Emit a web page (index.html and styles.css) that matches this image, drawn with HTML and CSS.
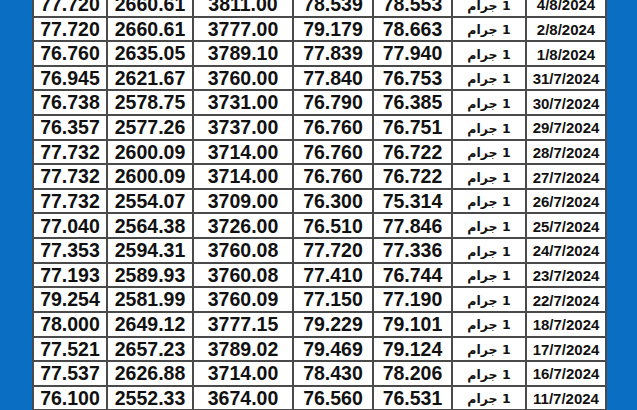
FILE: index.html
```html
<!DOCTYPE html>
<html lang="ar">
<head>
<meta charset="utf-8">
<link rel="stylesheet" href="styles.css">
</head>
<body>
<div class="page">
  <div class="grid" id="grid">
    <div class="c">77.720</div><div class="c">2660.61</div><div class="c">3811.00</div><div class="c">78.539</div><div class="c">78.553</div><div class="c ar">1 جرام</div><div class="c d">4/8/2024</div>
    <div class="c">77.720</div><div class="c">2660.61</div><div class="c">3777.00</div><div class="c">79.179</div><div class="c">78.663</div><div class="c ar">1 جرام</div><div class="c d">2/8/2024</div>
    <div class="c">76.760</div><div class="c">2635.05</div><div class="c">3789.10</div><div class="c">77.839</div><div class="c">77.940</div><div class="c ar">1 جرام</div><div class="c d">1/8/2024</div>
    <div class="c">76.945</div><div class="c">2621.67</div><div class="c">3760.00</div><div class="c">77.840</div><div class="c">76.753</div><div class="c ar">1 جرام</div><div class="c d">31/7/2024</div>
    <div class="c">76.738</div><div class="c">2578.75</div><div class="c">3731.00</div><div class="c">76.790</div><div class="c">76.385</div><div class="c ar">1 جرام</div><div class="c d">30/7/2024</div>
    <div class="c">76.357</div><div class="c">2577.26</div><div class="c">3737.00</div><div class="c">76.760</div><div class="c">76.751</div><div class="c ar">1 جرام</div><div class="c d">29/7/2024</div>
    <div class="c">77.732</div><div class="c">2600.09</div><div class="c">3714.00</div><div class="c">76.760</div><div class="c">76.722</div><div class="c ar">1 جرام</div><div class="c d">28/7/2024</div>
    <div class="c">77.732</div><div class="c">2600.09</div><div class="c">3714.00</div><div class="c">76.760</div><div class="c">76.722</div><div class="c ar">1 جرام</div><div class="c d">27/7/2024</div>
    <div class="c">77.732</div><div class="c">2554.07</div><div class="c">3709.00</div><div class="c">76.300</div><div class="c">75.314</div><div class="c ar">1 جرام</div><div class="c d">26/7/2024</div>
    <div class="c">77.040</div><div class="c">2564.38</div><div class="c">3726.00</div><div class="c">76.510</div><div class="c">77.846</div><div class="c ar">1 جرام</div><div class="c d">25/7/2024</div>
    <div class="c">77.353</div><div class="c">2594.31</div><div class="c">3760.08</div><div class="c">77.720</div><div class="c">77.336</div><div class="c ar">1 جرام</div><div class="c d">24/7/2024</div>
    <div class="c">77.193</div><div class="c">2589.93</div><div class="c">3760.08</div><div class="c">77.410</div><div class="c">76.744</div><div class="c ar">1 جرام</div><div class="c d">23/7/2024</div>
    <div class="c">79.254</div><div class="c">2581.99</div><div class="c">3760.09</div><div class="c">77.150</div><div class="c">77.190</div><div class="c ar">1 جرام</div><div class="c d">22/7/2024</div>
    <div class="c">78.000</div><div class="c">2649.12</div><div class="c">3777.15</div><div class="c">79.229</div><div class="c">79.101</div><div class="c ar">1 جرام</div><div class="c d">18/7/2024</div>
    <div class="c">77.521</div><div class="c">2657.23</div><div class="c">3789.02</div><div class="c">79.469</div><div class="c">79.124</div><div class="c ar">1 جرام</div><div class="c d">17/7/2024</div>
    <div class="c">77.537</div><div class="c">2626.88</div><div class="c">3714.00</div><div class="c">78.430</div><div class="c">78.206</div><div class="c ar">1 جرام</div><div class="c d">16/7/2024</div>
    <div class="c">76.100</div><div class="c">2552.33</div><div class="c">3674.00</div><div class="c">76.560</div><div class="c">76.531</div><div class="c ar">1 جرام</div><div class="c d">11/7/2024</div>
  </div>
</div>
</body>
</html>
```
FILE: styles.css
```css
html, body {
  margin: 0;
  padding: 0;
  background: #0a6fc2;
  height: 100%;
  overflow: hidden;
}
.page {
  padding-left: 32px;
}
.grid {
  width: 575px;
  box-sizing: border-box;
  margin-top: -7px;
  padding: 0 2px 2px 2px;
  background: #4a4a4a;
  display: grid;
  grid-template-columns: 72px 84px 98px 78px 77px 72px 78px;
  grid-auto-rows: 22.62px;
  gap: 2px;
}
.c {
  background: #ffffff;
  display: flex;
  align-items: center;
  justify-content: center;
  font-family: "Liberation Sans", Arial, sans-serif;
  font-weight: bold;
  font-size: 19.5px;
  color: #111;
  line-height: 1;
  white-space: nowrap;
  padding-top: 1px;
}
.ar {
  direction: rtl;
  font-family: "DejaVu Sans", sans-serif;
  font-size: 12.5px;
  padding-top: 3px;
}
.d {
  font-size: 15px;
}
```
